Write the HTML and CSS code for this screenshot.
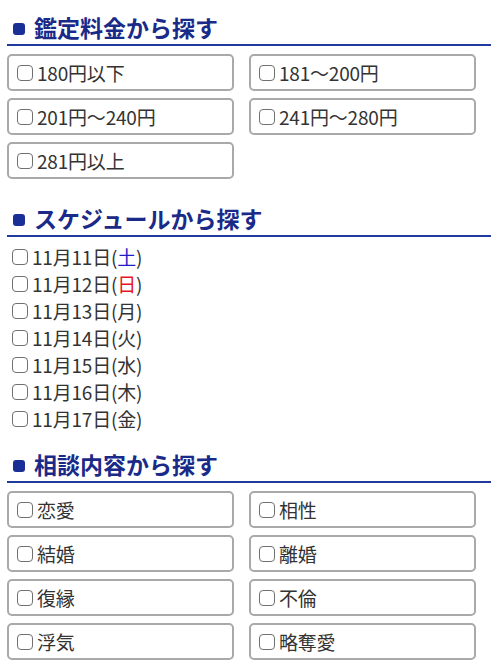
FILE: index.html
```html
<!DOCTYPE html>
<html lang="ja">
<head>
<meta charset="utf-8">
<link rel="stylesheet" href="styles.css">
</head>
<body>
<div class="page">
  <section class="sec sec-price">
    <h2 class="heading"><span class="bullet"></span>鑑定料金から探す</h2>
    <div class="grid">
      <label class="opt"><span class="cb"></span>180円以下</label>
      <label class="opt"><span class="cb"></span>181～200円</label>
      <label class="opt"><span class="cb"></span>201円～240円</label>
      <label class="opt"><span class="cb"></span>241円～280円</label>
      <label class="opt"><span class="cb"></span>281円以上</label>
    </div>
  </section>

  <section class="sec sec-schedule">
    <h2 class="heading"><span class="bullet"></span>スケジュールから探す</h2>
    <div class="list">
      <label class="day"><span class="cb"></span>11月11日(<span class="sat">土</span>)</label>
      <label class="day"><span class="cb"></span>11月12日(<span class="sun">日</span>)</label>
      <label class="day"><span class="cb"></span>11月13日(月)</label>
      <label class="day"><span class="cb"></span>11月14日(火)</label>
      <label class="day"><span class="cb"></span>11月15日(水)</label>
      <label class="day"><span class="cb"></span>11月16日(木)</label>
      <label class="day"><span class="cb"></span>11月17日(金)</label>
    </div>
  </section>

  <section class="sec sec-topic">
    <h2 class="heading"><span class="bullet"></span>相談内容から探す</h2>
    <div class="grid">
      <label class="opt"><span class="cb"></span>恋愛</label>
      <label class="opt"><span class="cb"></span>相性</label>
      <label class="opt"><span class="cb"></span>結婚</label>
      <label class="opt"><span class="cb"></span>離婚</label>
      <label class="opt"><span class="cb"></span>復縁</label>
      <label class="opt"><span class="cb"></span>不倫</label>
      <label class="opt"><span class="cb"></span>浮気</label>
      <label class="opt"><span class="cb"></span>略奪愛</label>
    </div>
  </section>
</div>
</body>
</html>
```

FILE: styles.css
```css
* { box-sizing: border-box; }
html, body { margin: 0; padding: 0; background: #fff; }
body {
  font-family: "Noto Sans CJK JP", "Noto Sans", sans-serif;
  color: #333;
  width: 500px;
  overflow: hidden;
}
.page { padding: 12px 9px 0 7px; }

.heading {
  margin: 0;
  height: 34px;
  line-height: 30px;
  font-size: 23px;
  font-weight: 700;
  color: #1a2a88;
  border-bottom: 2px solid #1f3a9c;
  display: flex;
  align-items: center;
  padding: 0 0 2px 6px;
}
.bullet {
  width: 12px;
  height: 12px;
  border-radius: 3px;
  background: #1a2f96;
  margin-right: 9px;
  margin-top: 3px;
  flex: none;
}

.grid {
  display: grid;
  grid-template-columns: 47% 47%;
  column-gap: 3%;
  row-gap: 7px;
  margin-top: 8px;
}
.opt {
  height: 37px;
  border: 2px solid #a9a9a9;
  border-radius: 5px;
  display: flex;
  align-items: center;
  padding-left: 8px;
  font-size: 19px;
  line-height: 1;
  letter-spacing: -0.2px;
}

.cb {
  display: block;
  width: 16px;
  height: 16px;
  border: 1.5px solid #707070;
  border-radius: 4px;
  background: #fff;
  margin: 0 4px 0 0;
  flex: none;
}

.sec-schedule { margin-top: 24px; }
.list {
  margin-top: 6px;
  display: flex;
  flex-direction: column;
}
.day {
  height: 27px;
  display: flex;
  align-items: center;
  padding-left: 5px;
  font-size: 19px;
  line-height: 1;
  letter-spacing: -0.2px;
}
.sat { color: #1f1fc8; }
.sun { color: #e8141e; }

.sec-topic { margin-top: 17px; }
```
